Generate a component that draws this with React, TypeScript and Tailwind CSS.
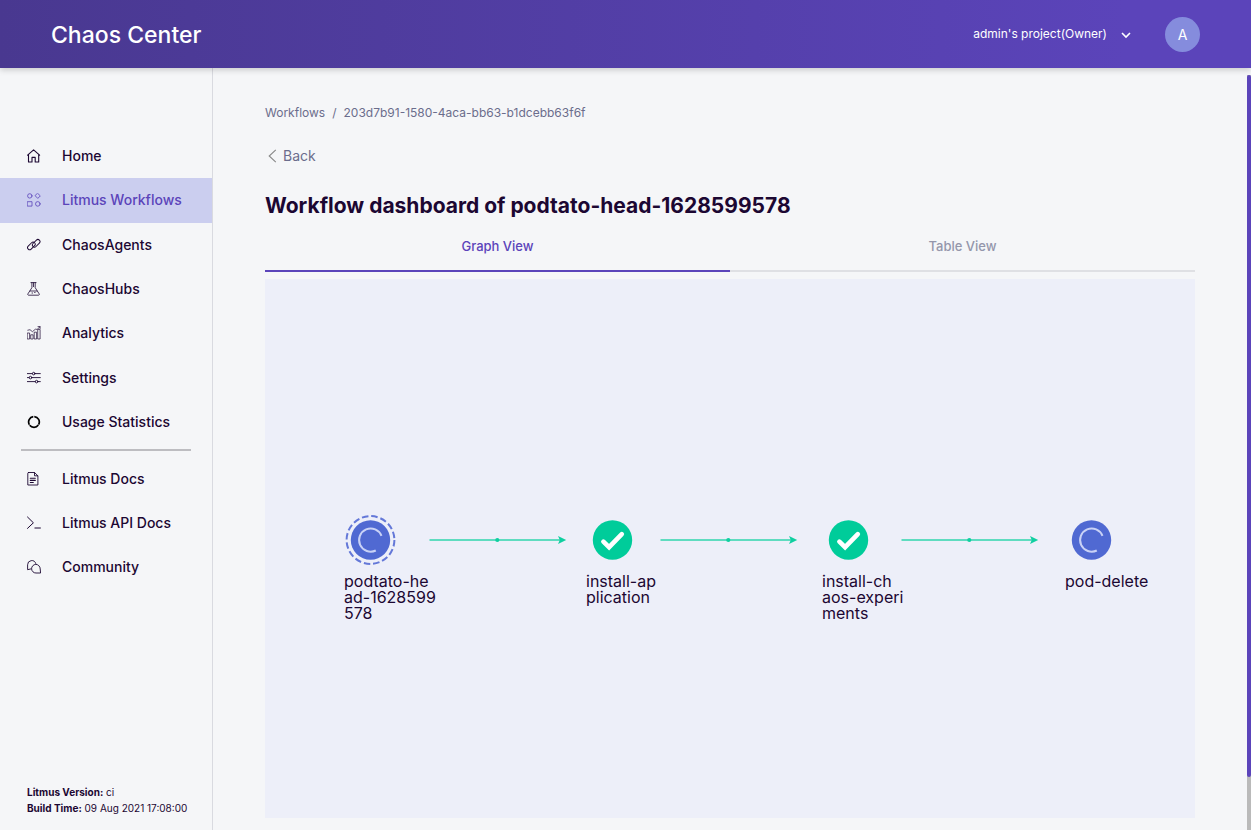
import type { ReactNode } from "react";

type NavItem = { label: string; icon: ReactNode; active?: boolean };

function Icon({ children, width = 1 }: { children: ReactNode; width?: number }) {
  return (
    <svg
      className="size-[14px] shrink-0"
      viewBox="0.4 0.4 14 14"
      fill="none"
      stroke="currentColor"
      strokeWidth={width}
      strokeLinecap="round"
      strokeLinejoin="round"
      aria-hidden="true"
    >
      {children}
    </svg>
  );
}

const mainNav: NavItem[] = [
  {
    label: "Home",
    icon: (
      <Icon width={1.1}>
        <path d="M1 6.6 7 1.2l6 5.4M1.9 6v7.4h3.5V8.8h3.2v4.6h3.5V6" />
      </Icon>
    ),
  },
  {
    label: "Litmus Workflows",
    active: true,
    icon: (
      <Icon width={0.8}>
        <circle cx="3.2" cy="3.3" r="2.2" />
        <path d="m11.2.9 2.5 2.4-2.5 2.5-2.5-2.5z" />
        <path d="M1 9.1h4.4v4.4H1z" />
        <circle cx="11.2" cy="11.3" r="2.3" />
      </Icon>
    ),
  },
  {
    label: "ChaosAgents",
    icon: (
      <Icon width={0.95}>
        <rect x="-4.5" y="-2.1" width="9" height="4.2" rx="2.1" transform="translate(4.8 8.3) rotate(-45)" />
        <rect x="-4.5" y="-2.1" width="9" height="4.2" rx="2.1" transform="translate(9.6 5.7) rotate(-45)" />
      </Icon>
    ),
  },
  {
    label: "ChaosHubs",
    icon: (
      <Icon width={0.8}>
        <path d="M4.3 1h5.2M5.3 1v5.1l-4 6.2c-.4.7 0 1.3.8 1.3h9.7c.8 0 1.2-.6.8-1.3l-4-6.2V1M6.9 1.2V5M3.5 9.4h6.9M5.4 11.4h.6M8 10.9h.5" />
      </Icon>
    ),
  },
  {
    label: "Analytics",
    icon: (
      <Icon width={0.7}>
        <path d="M1 7.4h2v6H1zM4.5 9.2h2v4.2h-2zM8 6.6h2v6.8H8zM11.5 3.8h2v9.6h-2z" />
        <path d="m1.2 4.6 2.2-.5 2.4 2 3-2.5 1.7.2 3-2.7M11.4 1h2.1v1.9" />
      </Icon>
    ),
  },
  {
    label: "Settings",
    icon: (
      <Icon width={0.9}>
        <path d="M.7 3h5M8.5 3h5.2M.7 7h1.8M5.2 7h8.5M.7 11h8M11.4 11h2.3" />
        <circle cx="7.1" cy="3" r="1.3" />
        <circle cx="3.9" cy="7" r="1.3" />
        <circle cx="10" cy="11" r="1.3" />
      </Icon>
    ),
  },
  {
    label: "Usage Statistics",
    icon: (
      <svg className="size-[14px] shrink-0 text-black" viewBox="0 0 14 14" fill="none" stroke="currentColor" strokeWidth="1.7" aria-hidden="true">
        <path d="M7.3 1.7A5.3 5.3 0 0 1 11.6 9.6M11.3 10.1A5.3 5.3 0 0 1 2.7 10.2M2.4 9.7A5.3 5.3 0 0 1 6.3 1.7" />
      </svg>
    ),
  },
];

const helpNav: NavItem[] = [
  {
    label: "Litmus Docs",
    icon: (
      <Icon width={0.9}>
        <path d="M1.9.9h6l3.4 3.3v9.2H1.2V1.6c0-.4.3-.7.7-.7zM7.9 1v3.2h3.2" />
        <path d="M3.7 6.7h5M3.7 8.8h5M3.7 10.9h3" strokeWidth="1.1" />
      </Icon>
    ),
  },
  {
    label: "Litmus API Docs",
    icon: (
      <Icon width={1}>
        <path d="m.9 1.4 5.9 5.8-5.9 5.6M8.3 12.4h5.5" />
      </Icon>
    ),
  },
  {
    label: "Community",
    icon: (
      <Icon width={0.9}>
        <path d="M4.3 9.3 1 10.1V5.2a4.2 4.2 0 0 1 8.2-1.3" />
        <path d="M13.6 13.4H9.4A4.3 4.3 0 1 1 13.6 9z" />
      </Icon>
    ),
  },
];

function NavLink({ item }: { item: NavItem }) {
  return (
    <a
      href="#"
      aria-current={item.active ? "page" : undefined}
      className={
        item.active
          ? "flex items-center gap-[21px] bg-[#cbceef] pl-[27px] text-[#5b44ba]"
          : "flex items-center gap-[21px] pl-[27px] text-[#1c0732]"
      }
    >
      {item.icon}
      <span className="text-sm font-medium">{item.label}</span>
    </a>
  );
}

function Running({ ring = false }: { ring?: boolean }) {
  return (
    <svg className="size-[52px]" viewBox="-0.5 0 52 52" fill="none" aria-hidden="true">
      {ring && <circle cx="26" cy="26" r="23.9" stroke="#6478d8" strokeWidth="2" strokeDasharray="6.5 2.886" />}
      <circle cx="26" cy="26" r="19.7" fill="#5069d2" />
      <path d="M37 21.9A11.6 11.6 0 1 0 31.3 36.5" stroke="#c9d2f6" strokeWidth="2" />
    </svg>
  );
}

function Succeeded() {
  return (
    <svg className="size-[52px]" viewBox="-0.5 0 52 52" fill="none" aria-hidden="true">
      <circle cx="26" cy="26" r="19.7" fill="#00cc9a" />
      <path d="m16.9 27.6 5.7 5.6L35.3 20.2" stroke="#fff" strokeWidth="4.6" strokeLinecap="round" />
    </svg>
  );
}

const nodes = [
  { lines: ["podtato-he", "ad-1628599", "578"], place: "left-[79px]", icon: <Running ring /> },
  { lines: ["install-ap", "plication"], place: "left-[321px]", icon: <Succeeded /> },
  { lines: ["install-ch", "aos-experi", "ments"], place: "left-[557px]", icon: <Succeeded /> },
  { lines: ["pod-delete"], place: "left-[800px]", icon: <Running /> },
];

const edges = ["left-[164px]", "left-[395px]", "left-[636px]"];

export default function App() {
  return (
    <div className="flex min-h-screen flex-col bg-[#f5f6f8] font-['Inter',sans-serif] text-[#1c0732]">
      <header className="z-10 flex h-[68px] items-center bg-linear-to-r from-[#493890] to-[#5b44ba] to-90% pr-[51px] pl-[51px] text-white shadow-[0_2px_6px_rgba(0,0,0,0.18)]">
        <span className="pt-[2px] text-[23px] leading-8 font-medium">Chaos Center</span>
        <button type="button" className="ml-auto flex items-center gap-[11px] text-xs">
          <span>admin's project(Owner)</span>
          <svg className="mt-[2px] size-4" viewBox="0 0 16 16" fill="none" stroke="currentColor" strokeWidth="1.6" aria-hidden="true">
            <path d="m4 6 4 4 4-4" />
          </svg>
        </button>
        <button type="button" aria-label="Account" className="ml-[31px] size-[35px] rounded-full bg-[#858cdd] pt-[2px] text-sm">
          A
        </button>
      </header>

      <div className="flex flex-1">
        <aside className="flex w-[213px] shrink-0 flex-col border-r border-[#d9dae0] pt-[66px]">
          <nav aria-label="Main" className="grid h-[310px] auto-rows-fr">
            {mainNav.map((item) => (
              <NavLink key={item.label} item={item} />
            ))}
          </nav>
          <hr className="mx-[21px] mt-[5px] mb-[6px] border-t-2 border-[#bdbdc1]" />
          <nav aria-label="Help" className="grid h-[132px] auto-rows-fr">
            {helpNav.map((item) => (
              <NavLink key={item.label} item={item} />
            ))}
          </nav>
          <div className="mt-auto pb-[14px] pl-[27px] text-[10px] leading-4">
            <p>
              <b>Litmus Version:</b> ci
            </p>
            <p>
              <b>Build Time:</b> 09 Aug 2021 17:08:00
            </p>
          </div>
        </aside>

        <main className="flex min-w-0 flex-1 flex-col px-[52px] pt-9 pb-3">
          <nav aria-label="Breadcrumb" className="flex gap-[7px] text-xs leading-[18px] text-[#6b6d8c]">
            <a href="#">Workflows</a>
            <span>/</span>
            <a href="#">203d7b91-1580-4aca-bb63-b1dcebb63f6f</a>
          </nav>
          <button type="button" className="mt-6 flex items-center gap-[6px] self-start pl-[3px] text-sm text-[#6b6d8c]">
            <svg className="h-[14px] w-[9px]" viewBox="0 0 9 14" fill="none" stroke="#888" strokeWidth="1.1" aria-hidden="true">
              <path d="M7.8.8 1.2 7l6.6 6.2" />
            </svg>
            Back
          </button>
          <h1 className="mt-6 text-[21px] leading-8 font-bold">Workflow dashboard of podtato-head-1628599578</h1>
          <div role="tablist" className="mt-[2px] grid grid-cols-2 text-[13px] font-medium">
            <button type="button" role="tab" aria-selected="true" className="h-12 border-b-2 border-[#5b44ba] text-[#5b44ba]">
              Graph View
            </button>
            <button type="button" role="tab" aria-selected="false" className="h-12 border-b-2 border-[#dfe0e4] text-[#9496ab]">
              Table View
            </button>
          </div>
          <section aria-label="Workflow graph" className="relative mt-[7px] min-h-[400px] flex-1 bg-[#edeff9]">
            {edges.map((place) => (
              <svg key={place} className={`absolute top-1/2 -mt-[15px] h-3 w-[138px] ${place}`} viewBox="0 0 138 12" aria-hidden="true">
                <path d="M.5 6H132" stroke="#5fdcc0" strokeWidth="2" />
                <circle cx="68.3" cy="6" r="2.1" fill="#0fcfa0" />
                <path d="m129 2 8.2 4-8.2 4 1.8-4z" fill="#0fcfa0" />
              </svg>
            ))}
            {nodes.map((node) => (
              <div key={node.place} className={`absolute top-1/2 -mt-[35px] ${node.place}`}>
                {node.icon}
                <p className="mt-[7px] text-base leading-4">
                  {node.lines.map((line) => (
                    <span key={line} className="block">
                      {line}
                    </span>
                  ))}
                </p>
              </div>
            ))}
          </section>
        </main>

        <div className="mt-[7px] flex w-1 shrink-0 flex-col bg-[#bababa]" aria-hidden="true">
          <div className="h-[93%] rounded-sm bg-[#5b44ba]" />
        </div>
      </div>
    </div>
  );
}
